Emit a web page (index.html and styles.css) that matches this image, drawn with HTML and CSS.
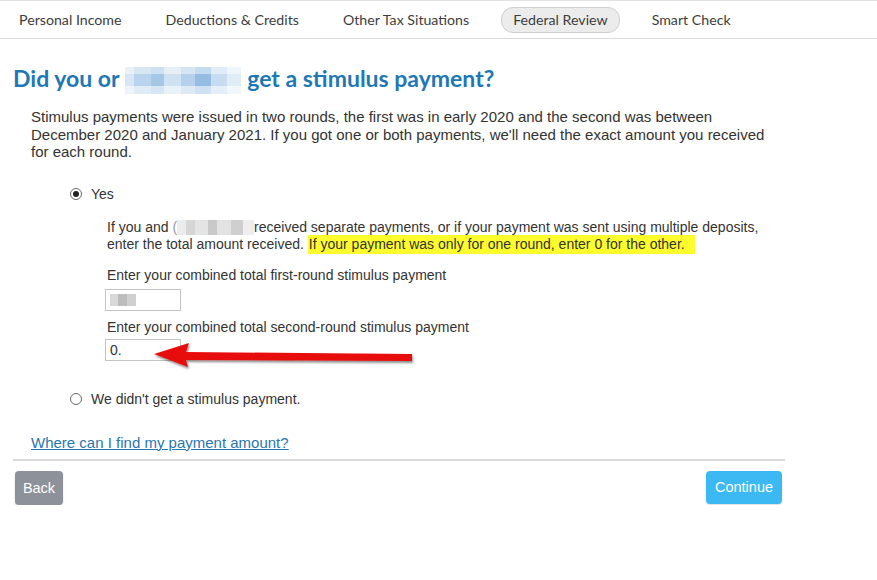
FILE: index.html
```html
<!DOCTYPE html>
<html lang="en">
<head>
  <meta charset="UTF-8" />
  <meta name="viewport" content="width=device-width, initial-scale=1.0"/>
  <title>Federal Review - Stimulus payment</title>
  <link rel="stylesheet" href="styles.css">
</head>
<body>

  <nav class="tabs">
    <span class="tab">Personal Income</span>
    <span class="tab">Deductions &amp; Credits</span>
    <span class="tab">Other Tax Situations</span>
    <span class="tab active">Federal Review</span>
    <span class="tab">Smart Check</span>
  </nav>

  <main class="page">
    <h1 class="title">Did you or <span class="blur-name"></span> get a stimulus payment?</h1>

    <p class="intro">Stimulus payments were issued in two rounds, the first was in early 2020 and the second was between December 2020 and January 2021. If you got one or both payments, we'll need the exact amount you received for each round.</p>

    <div class="choices">
      <label class="choice">
        <span class="radio checked"></span>
        Yes
      </label>

      <div class="details">
        <p class="note">If you and <span class="paren">(</span><span class="blur-gray"></span>received separate payments, or if your payment was sent using multiple deposits, enter the total amount received. <mark>If your payment was only for one round, enter 0 for the other.</mark></p>

        <div class="field">
          <label>Enter your combined total first-round stimulus payment</label>
          <div class="amount"><span class="blur-small"></span></div>
        </div>

        <div class="field with-arrow">
          <label>Enter your combined total second-round stimulus payment</label>
          <div class="amount">0.</div>
          <!-- red arrow annotation pointing at the box -->
          <svg class="arrow" width="270" height="34" viewBox="0 0 270 34">
            <defs>
              <filter id="shade" x="-10%" y="-40%" width="120%" height="200%">
                <feDropShadow dx="1" dy="2" stdDeviation="1.2" flood-color="#000" flood-opacity="0.45"/>
              </filter>
            </defs>
            <polygon filter="url(#shade)" fill="#e80f0f"
              points="2,12 37,1 34,10 260,12 260,19 34,18 36,25"/>
          </svg>
        </div>
      </div>

      <label class="choice">
        <span class="radio"></span>
        We didn't get a stimulus payment.
      </label>
    </div>

    <a class="help-link" href="#">Where can I find my payment amount?</a>

    <div class="actions">
      <button class="btn btn-back">Back</button>
      <button class="btn btn-continue">Continue</button>
    </div>
  </main>

</body>
</html>
```

FILE: styles.css
```css
:root {
  --blue: #1f78b6;
  --link: #2a76b0;
  --text: #333333;
  --line: #dcdcdc;
}

* {
  box-sizing: border-box;
}

body {
  margin: 0;
  font-family: "Liberation Sans", Arial, sans-serif;
  color: var(--text);
  background: #fff;
}

/* top tabs */
.tabs {
  display: flex;
  align-items: center;
  gap: 20px;
  height: 39px;
  padding-left: 7px;
  border-top: 1px solid #e2e2e2;
  border-bottom: 1px solid #dadada;
  font-family: Lato, "Noto Sans", sans-serif;
  font-size: 14.2px;
  color: #3d3d3d;
}

.tab {
  padding: 3px 11px 4px;
  border: 1px solid transparent;
  border-radius: 12px;
}

.tab.active {
  background: #ececec;
  border-color: #cfcfcf;
}

/* page body */
.page {
  width: 785px;
  padding: 0 0 0 13px;
}

.title {
  margin: 25px 0 0;
  font-family: Lato, "Noto Sans", sans-serif;
  font-size: 23px;
  font-weight: 700;
  color: var(--blue);
  line-height: 28px;
}

.blur-name {
  display: inline-block;
  width: 116px;
  height: 27px;
  vertical-align: -7px;
  margin: 0 1px 0 0;
  background:
    linear-gradient(90deg, #d7e7f4 0 8%, #b9d4ec 8% 22%, #a5c8e7 22% 34%, #cfe2f2 34% 48%, #b4d0ea 48% 60%, #95bde2 60% 74%, #c6dcf0 74% 88%, #e0edf7 88%);
  box-shadow: inset 0 -8px 0 rgba(255, 255, 255, 0.55), inset 0 7px 0 rgba(255, 255, 255, 0.45);
}

.intro {
  margin: 14px 0 0 18px;
  width: 740px;
  font-size: 15px;
  line-height: 17.5px;
}

.choices {
  margin: 23px 0 0 57px;
}

.choice {
  display: flex;
  align-items: center;
  gap: 9px;
  font-size: 14px;
  height: 20px;
}

.radio {
  width: 12px;
  height: 12px;
  border: 1px solid #6a6a6a;
  border-radius: 50%;
  display: flex;
  align-items: center;
  justify-content: center;
}

.radio.checked::after {
  content: "";
  width: 6px;
  height: 6px;
  border-radius: 50%;
  background: #222;
}

.details {
  padding: 15px 0 28px 37px;
  font-size: 14px;
}

.note {
  margin: 0;
  width: 680px;
  line-height: 17px;
}

.paren {
  color: #999;
}

.blur-gray {
  display: inline-block;
  width: 77px;
  height: 15px;
  vertical-align: -3px;
  background:
    linear-gradient(90deg, #ececec 0 12%, #d6d6d6 12% 24%, #e4e4e4 24% 40%, #c9c9c9 40% 52%, #e2e2e2 52% 70%, #cfcfcf 70% 86%, #eeeeee 86%);
}

mark {
  background: #fdfd2e;
  color: var(--text);
  padding: 1px 10px 2px 1px;
}

.field {
  margin-top: 14px;
}

.field + .field {
  margin-top: 8px;
}

.field label {
  display: block;
  line-height: 17px;
  margin-bottom: 5px;
}

.field + .field label {
  margin-bottom: 3px;
}

.amount {
  margin-left: -2px;
  width: 76px;
  height: 22px;
  border: 1px solid #c4c4c4;
  padding: 2px 4px;
  line-height: 16px;
  font-size: 14px;
}

.blur-small {
  display: inline-block;
  width: 26px;
  height: 12px;
  margin-top: 2px;
  background: linear-gradient(90deg, #d9d9d9 0 30%, #bdbdbd 30% 65%, #d0d0d0 65%);
}

.with-arrow {
  position: relative;
}

.arrow {
  position: absolute;
  left: 45px;
  top: 23px;
}

.help-link {
  display: inline-block;
  margin: 25px 0 0 18px;
  font-size: 15px;
  color: var(--link);
  text-decoration: underline;
}

.actions {
  display: flex;
  justify-content: space-between;
  align-items: flex-start;
  margin-top: 7px;
  width: 772px;
  padding: 10px 3px 0 2px;
  border-top: 2px solid var(--line);
}

.btn {
  border: none;
  border-radius: 4px;
  color: #fff;
  font-family: "Liberation Sans", Arial, sans-serif;
  font-size: 14.5px;
  cursor: pointer;
  box-shadow: 0 1px 2px rgba(0, 0, 0, 0.15);
}

.btn-back {
  background: #8d9199;
  width: 48px;
  height: 34px;
}

.btn-continue {
  background: #3cb9f2;
  width: 76px;
  height: 33px;
}
```
